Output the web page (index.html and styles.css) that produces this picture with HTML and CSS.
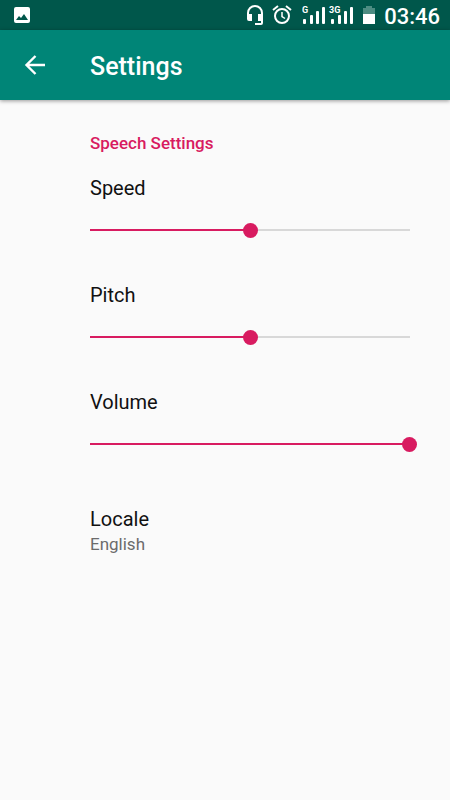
FILE: index.html
```html
<!DOCTYPE html>
<html lang="en">
<head>
<meta charset="utf-8">
<meta name="viewport" content="width=device-width, initial-scale=1">
<title>Settings</title>
<link rel="stylesheet" href="styles.css">
</head>
<body>
<div class="status-bar">
  <svg class="picture" width="18" height="18" viewBox="0 0 18 18" aria-hidden="true"><path fill="#fff" fill-rule="evenodd" d="M3 1h12q2 0 2 2v12q0 2-2 2H3q-2 0-2-2V3q0-2 2-2zM3 14h12l-4-6-3 4-2-2z"/></svg>
  <div class="status-icons">
    <svg width="18" height="22" viewBox="0 0 18 22" aria-hidden="true"><path fill="none" stroke="#fff" stroke-width="2" d="M2 14V9a7 7 0 0 1 14 0v10q0 1-1 1H9"/><path fill="#fff" d="M1 10h5v7H3q-2 0-2-2zM12 10h5v7h-5z"/></svg>
    <svg width="20" height="22" viewBox="0 0 20 22" aria-hidden="true"><g fill="none" stroke="#fff" stroke-width="2"><circle cx="10" cy="12" r="7"/><path d="M1 6l5-4M19 6l-5-4"/><path stroke-width="1.500" d="M10 8v4.500l3 2"/></g></svg>
    <svg class="signals" width="52" height="22" viewBox="0 0 52 22" aria-hidden="true"><g fill="#fff"><rect x="1" y="15" width="3" height="5" rx="1"/><rect x="8" y="11" width="3" height="9" rx="1"/><rect x="14" y="7" width="3" height="13" rx="1"/><rect x="20" y="3" width="3" height="17" rx="1"/><rect x="29" y="15" width="3" height="5" rx="1"/><rect x="36" y="11" width="3" height="9" rx="1"/><rect x="42" y="7" width="3" height="13" rx="1"/><rect x="48" y="3" width="3" height="17" rx="1"/><text x="0" y="9">G</text><text x="27" y="9">3G</text></g></svg>
    <svg width="14" height="22" viewBox="0 0 14 22" aria-hidden="true"><path fill="#4d8c82" d="M4 2h6v2h3v6H1V4h3z"/><path fill="#fff" d="M1 10h12v10H1z"/></svg>
    <time class="clock">03:46</time>
  </div>
</div>
<header class="app-bar">
  <button class="back" type="button" aria-label="Back"><svg width="22" height="22" viewBox="0 0 22 22" aria-hidden="true"><path fill="none" stroke="#fff" stroke-width="2.400" d="M21 11H3M11.500 2L2.500 11l9 9"/></svg></button>
  <h1>Settings</h1>
</header>
<main class="settings">
  <h2>Speech Settings</h2>
  <div class="setting"><label for="speed">Speed</label><input id="speed" type="range" min="0" max="100" value="50" style="--fill: 0.5"></div>
  <div class="setting"><label for="pitch">Pitch</label><input id="pitch" type="range" min="0" max="100" value="50" style="--fill: 0.5"></div>
  <div class="setting"><label for="volume">Volume</label><input id="volume" type="range" min="0" max="100" value="100" style="--fill: 1"></div>
  <button class="locale" type="button"><span>Locale</span><span class="summary">English</span></button>
</main>
</body>
</html>
```
FILE: styles.css
```css
* {
  box-sizing: border-box;
}

body {
  margin: 0;
  min-height: 100vh;
  background: #fafafa;
  color: #111;
  font: 20px/24px Roboto, sans-serif;
}

button {
  border: 0;
  padding: 0;
  background: none;
  color: inherit;
  font: inherit;
}

svg {
  display: block;
}

.status-bar {
  display: flex;
  align-items: center;
  justify-content: space-between;
  height: 30px;
  padding: 0 10px 0 13px;
  background: #00574b;
}

.status-icons {
  display: flex;
  align-items: center;
  gap: 8px;
}

.signals {
  margin-left: 2px;
}

.signals text {
  font: 700 9px Roboto, sans-serif;
}

.clock {
  color: #fff;
  font-size: 22px;
  font-weight: 500;
  padding-top: 3px;
}

.app-bar {
  display: flex;
  align-items: center;
  height: 70px;
  background: #008577;
  color: #fff;
  box-shadow: 0 1px 4px rgba(0, 0, 0, 0.4);
}

.back {
  display: flex;
  justify-content: center;
  width: 70px;
  margin-right: 20px;
}

h1 {
  margin: 0;
  padding-top: 3px;
  font-size: 25px;
  font-weight: 500;
  line-height: 30px;
}

.settings {
  padding: 31px 40px 0 90px;
}

h2 {
  margin: 0 0 21px;
  color: #d81b60;
  font-size: 17px;
  font-weight: 500;
}

.setting {
  display: flex;
  flex-direction: column;
  gap: 18px;
  margin-bottom: 41px;
}

input[type="range"] {
  --line: calc(100% - 14px);
  appearance: none;
  height: 24px;
  margin: 0 -7px;
  background:
    linear-gradient(#d81b60, #d81b60) 7px center / calc(var(--line) * var(--fill)) 2px no-repeat,
    linear-gradient(#d8d8d8, #d8d8d8) 7px center / var(--line) 2px no-repeat;
}

input[type="range"]::-webkit-slider-thumb {
  appearance: none;
  width: 15px;
  height: 15px;
  border-radius: 50%;
  background: #d81b60;
}

.locale {
  display: flex;
  flex-direction: column;
  align-items: flex-start;
  gap: 1px;
  width: 100%;
  margin-top: 51px;
}

.summary {
  color: #6b6b6b;
  font-size: 17px;
}
```
